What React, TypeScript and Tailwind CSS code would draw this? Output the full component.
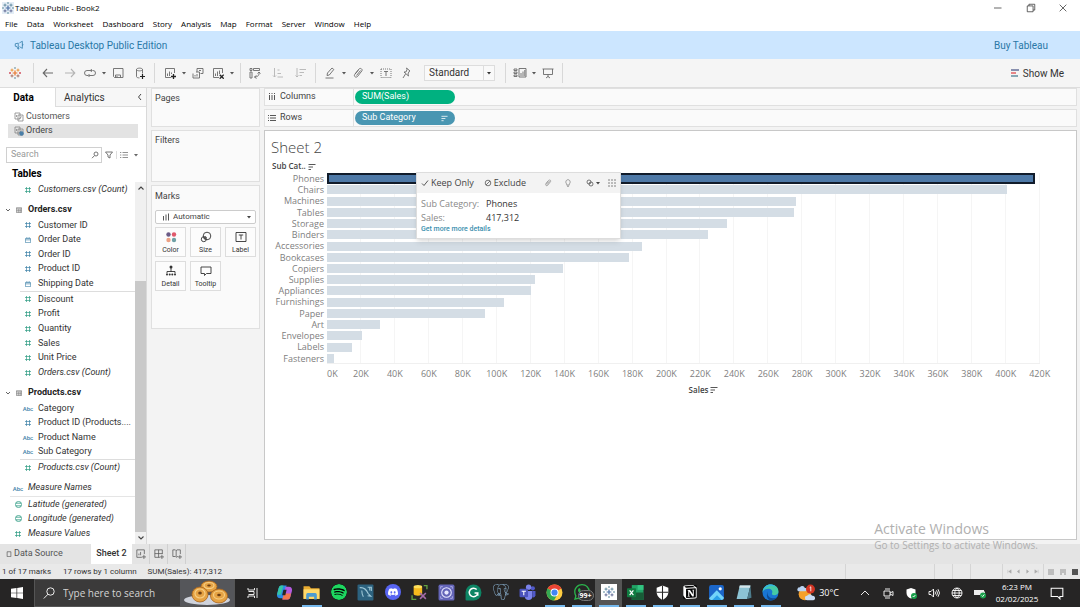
import type { ReactNode } from "react";
import {
  SiDiscord,
  SiGrammarly,
  SiNotion,
  SiPostgresql,
  SiSpotify,
  SiWhatsapp,
} from "react-icons/si";

type IconProps = { children: ReactNode; className?: string; box?: number };

const Icon = ({ children, className = "size-3", box = 12 }: IconProps) => (
  <svg
    viewBox={`0 0 ${box} ${box}`}
    className={`shrink-0 ${className}`}
    fill="none"
    stroke="currentColor"
    strokeWidth="0.9"
    aria-hidden="true"
  >
    {children}
  </svg>
);

const CaretIcon = () => (
  <Icon className="size-1" box={4}>
    <path d="M0 1h4L2 3.4z" fill="currentColor" stroke="none" />
  </Icon>
);

const SortIcon = ({ className = "size-2" }: { className?: string }) => (
  <Icon className={className} box={8}>
    <path d="M0.5 1.5h7M0.5 4h4.5M0.5 6.5h2.5" />
  </Icon>
);

const TableauMark = ({ colorful = false }: { colorful?: boolean }) => (
  <Icon>
    <path d="M6 3.6v4.8M3.6 6h4.8" stroke={colorful ? "#e8762d" : "#4a6fa5"} strokeWidth="1.2" />
    <path d="M3 1.6v3M1.5 3.1h3M9 1.6v3M7.5 3.1h3" stroke={colorful ? "#eb912c" : "#5b879b"} />
    <path d="M3 7.4v3M1.5 8.9h3M9 7.4v3M7.5 8.9h3" stroke={colorful ? "#a06a5b" : "#5b6591"} />
    <path d="M6 0v2M5 1h2M6 10v2M5 11h2" stroke="#7099a6" strokeWidth="0.7" />
    <path d="M1 5v2M0 6h2M11 5v2M10 6h2" stroke={colorful ? "#c72035" : "#7099a6"} strokeWidth="0.7" />
  </Icon>
);

const Tool = ({ label, children, dim }: { label: string; children: ReactNode; dim?: boolean }) => (
  <button
    type="button"
    aria-label={label}
    className={`flex h-6 w-5 items-center justify-center ${dim ? "text-[#b4b4b4]" : "text-[#6a6a6a]"}`}
  >
    {children}
  </button>
);

const ToolCaret = ({ label }: { label: string }) => (
  <button type="button" aria-label={label} className="flex h-6 w-2 items-center justify-center text-[#555]">
    <CaretIcon />
  </button>
);

const Divider = () => <span className="h-5 w-px bg-[#d8d8d8]" />;

const MENUS = [
  "File",
  "Data",
  "Worksheet",
  "Dashboard",
  "Story",
  "Analysis",
  "Map",
  "Format",
  "Server",
  "Window",
  "Help",
];

const WindowHeader = () => (
  <header className="bg-white font-['Open_Sans',sans-serif] text-[8px] text-black">
    <div className="flex h-4 items-center gap-px pl-0.5">
      <span className="flex bg-[#e4edf6]">
        <TableauMark />
      </span>
      <span>Tableau Public - Book2</span>
      <div className="ml-auto flex items-center gap-[22px] pr-3 text-[#333]">
        <button type="button" aria-label="Minimize">
          <Icon className="size-2.5">
            <path d="M0 6h9" />
          </Icon>
        </button>
        <button type="button" aria-label="Restore">
          <Icon className="size-2.5">
            <path d="M1.5 3.5h7v7h-7zM3.5 3.5v-2h7v7h-2" />
          </Icon>
        </button>
        <button type="button" aria-label="Close">
          <Icon className="size-2.5">
            <path d="M2 2l8 8M10 2l-8 8" />
          </Icon>
        </button>
      </div>
    </div>
    <nav className="flex h-[15px] items-center gap-[9px] pl-[5px]">
      {MENUS.map((m) => (
        <button key={m} type="button">
          {m}
        </button>
      ))}
    </nav>
  </header>
);

const Banner = () => (
  <div className="flex h-7 items-center bg-[#cce6ff] pr-8 pl-3.5 text-[10px] text-[#2a78a6]">
    <Icon className="mr-1.5 size-2.5">
      <path d="M1.5 4.5v3l2 .3 1.2 3h1.2l-.8-2.8V3.8zM6.5 3.5L10 1.5v8.5L6.5 8M10 4.5c1 .3 1 2 0 2.3" />
    </Icon>
    <span>Tableau Desktop Public Edition</span>
    <a href="#buy" className="ml-auto">
      Buy Tableau
    </a>
  </div>
);

const Toolbar = () => (
  <div className="flex h-7 items-center bg-[#f5f5f5] text-[#555]">
    <div className="flex pr-2 pl-[5px]">
      <Tool label="Start page">
        <TableauMark colorful />
      </Tool>
    </div>
    <Divider />
    <div className="flex px-1">
      <div className="flex gap-0.5">
        <Tool label="Undo">
          <Icon>
            <path d="M11 6H1.5M5 2L1.2 6 5 10" strokeWidth="1.1" />
          </Icon>
        </Tool>
        <Tool label="Redo" dim>
          <Icon>
            <path d="M1 6h9.500M7 2l3.800 4L7 10" strokeWidth="1.1" />
          </Icon>
        </Tool>
      </div>
      <Tool label="Replay">
        <Icon>
          <path d="M8 3.500H3a2.500 2.500 0 000 5h1M4.500 8.500H9a2.500 2.500 0 000-5M6.800 2L8.300 3.500 6.800 5M5.500 7L4 8.500 5.500 10" />
        </Icon>
      </Tool>
      <ToolCaret label="Replay options" />
      <div className="flex gap-0.5">
        <Tool label="Save">
          <Icon>
            <path d="M1.5 1.5h9.5v9H2.5l-1-1zM3.5 10.5V8h5v2.5M5 9v1" />
          </Icon>
        </Tool>
        <Tool label="New data source">
          <Icon>
            <path d="M2.5 2.5c0-1.8 6-1.8 6 0s-6 1.8-6 0v7c0 1 1.5 1.4 3 1.4M8.5 2.5v4" />
            <path d="M8.5 7v5M6 9.5h5" stroke="#222" strokeWidth="1.2" />
          </Icon>
        </Tool>
      </div>
    </div>
    <Divider />
    <div className="flex pr-1 pl-[5px]">
      <Tool label="New worksheet">
        <Icon>
          <path d="M10.5 6V1.5h-9v9H7M3.5 9V6.5M5.5 9V4.5M7.5 7V5.5" />
          <path d="M9.5 7v5M7 9.5h5" stroke="#222" strokeWidth="1.3" />
        </Icon>
      </Tool>
      <ToolCaret label="Worksheet options" />
      <Tool label="Duplicate">
        <Icon>
          <path d="M5 5V1.5h6v5H8.5M1 6.5V11h6.5V5H4M3 9.500V8M5 9.5V7M7 3.5h2" />
        </Icon>
      </Tool>
      <Tool label="Clear sheet">
        <Icon>
          <path d="M10.5 6V1.5h-9v9H7M3.5 9V6.5M5.5 9V4.5M7.5 7V3.5" />
          <path d="M7.7 7.7l4 4M11.7 7.7l-4 4" stroke="#222" strokeWidth="1.3" />
        </Icon>
      </Tool>
      <ToolCaret label="Clear options" />
    </div>
    <Divider />
    <div className="flex gap-[3px] px-1">
      <Tool label="Swap rows and columns">
        <Icon>
          <path d="M1 1.5h2v2H1zM4.500 1.5h6v2h-6zM1 5h2v6H1zM10 5c.5 3-1 5-4.500 5M7.500 8.500L5.500 10l2 1.500M8.500 6.500L10 5l1.500 1.500" />
        </Icon>
      </Tool>
      <Tool label="Sort ascending" dim>
        <Icon>
          <path d="M2.5 1v9M1 8.5L2.5 10 4 8.5M5.500 3h2M5.500 6.500h3.5M5.5 10H11" />
        </Icon>
      </Tool>
      <Tool label="Sort descending" dim>
        <Icon>
          <path d="M2 1v9M.5 8.5L2 10l1.5-1.5M4.5 2.5H11M4.5 5.5h4.5M4.5 8.5H7" />
        </Icon>
      </Tool>
    </div>
    <Divider />
    <div className="flex pr-2 pl-1">
      <Tool label="Highlight">
        <Icon>
          <path d="M3 8.5l.5-2.5L8 1l1.8 1.5-4.500 5.500zM1.5 11h8" />
        </Icon>
      </Tool>
      <ToolCaret label="Highlight options" />
      <Tool label="Group members">
        <Icon>
          <path d="M3 7l4-5c1.5-1.5 4 .3 2.8 2L5.5 9.5C4 11 1.5 9.5 2.7 7.5l3.6-4.3M4.5 8.5l4-5" />
        </Icon>
      </Tool>
      <ToolCaret label="Group options" />
      <Tool label="Show mark labels">
        <Icon>
          <path d="M1 2h10v8.5H1z" strokeDasharray="1 1" />
          <path d="M4 4.5h4M6 4.5V9" />
        </Icon>
      </Tool>
      <Tool label="Fix axes">
        <Icon>
          <path d="M6.5 1l3.5 3-1 .5-1 2.5.5 2L4 5l2 0 1-2.500zM5.5 7L3 11" />
        </Icon>
      </Tool>
    </div>
    <div className="mr-2.5 grid w-[71px] grid-cols-[1fr_11px] items-center border border-[#ddd] bg-[#f9f9f9] text-[#333]">
      <select
        aria-label="Fit"
        className="col-span-2 col-start-1 row-start-1 h-3.5 appearance-none pl-1 text-[10px] leading-[14px]"
      >
        <option>Standard</option>
      </select>
      <span className="pointer-events-none col-start-2 row-start-1 flex h-full items-center justify-center border-l border-[#ddd]">
        <CaretIcon />
      </span>
    </div>
    <Divider />
    <div className="flex px-1">
      <Tool label="Show cards">
        <Icon className="size-3.5" box={14}>
          <path d="M1 3h3v1.5H1zM1 6h3v1.5H1zM1 9h3v1.5H1zM6 2.5h7V11H6zM8 10V7M10 10V5.5M11.8 10V4" />
        </Icon>
      </Tool>
      <ToolCaret label="Card options" />
      <Tool label="Presentation mode">
        <Icon>
          <path d="M.5 2h11M1.5 2v5.5h9V2M6 7.5V10M4 11l2-1.5L8 11" />
        </Icon>
      </Tool>
    </div>
    <Divider />
    <button type="button" className="mr-4 ml-auto flex items-center gap-1 text-[10px] text-[#333]">
      <Icon className="size-2" box={8}>
        <path d="M0 1h8" stroke="#5b6591" strokeWidth="1.4" />
        <path d="M0 4h5" stroke="#e15759" strokeWidth="1.4" />
        <path d="M0 7h7" stroke="#5b879b" strokeWidth="1.4" />
      </Icon>
      Show Me
    </button>
  </div>
);

type FieldKind = "num" | "date" | "abc" | "geo";

const FieldIcon = ({ kind, measure }: { kind: FieldKind; measure?: boolean }) => {
  const color = measure ? "text-[#2f9c84]" : "text-[#3f82a8]";
  if (kind === "abc") {
    return <span className="w-3 text-center text-[6px] font-medium text-[#3f82a8]">Abc</span>;
  }
  return (
    <span className={`flex w-3 justify-center ${color}`}>
      {kind === "num" && (
        <Icon className="size-2" box={8}>
          <path d="M2.5 1v6M5.5 1v6M1 2.5h6M1 5.5h6" strokeWidth="0.7" />
        </Icon>
      )}
      {kind === "date" && (
        <Icon className="size-1.5" box={8}>
          <path d="M0.5 2h7v5.5h-7zM0.5 3.8h7M2.5 0v2M5.5 0v2" />
        </Icon>
      )}
      {kind === "geo" && (
        <Icon className="size-[7px]" box={8}>
          <path d="M4 .5a3.5 3.5 0 100 7 3.5 3.5 0 000-7zM1 2.500h6M1 5.500h6" />
        </Icon>
      )}
    </span>
  );
};

interface FieldProps {
  name: string;
  kind: FieldKind;
  measure?: boolean;
  italic?: boolean;
  root?: boolean;
}

const Field = ({ name, kind, measure, italic, root }: FieldProps) => (
  <li className={`flex h-full min-h-0 items-center gap-1 ${root ? "pl-3" : "pl-[22px]"}`}>
    <FieldIcon kind={kind} measure={measure} />
    <span className={`whitespace-nowrap ${italic ? "italic" : ""}`}>{name}</span>
  </li>
);

const TableHeading = ({ name }: { name: string }) => (
  <div className="flex h-4 items-center pl-1.5 font-bold text-[#222]">
    <Icon className="mr-1.5 size-1" box={4}>
      <path d="M0 1l2 2 2-2" strokeWidth="0.7" />
    </Icon>
    <Icon className="mr-1.5 size-1.5" box={8}>
      <path d="M.5 1h7v6.5h-7zM.5 2.5h7M.5 5h7M3 2.5v5M5.5 2.5v5" stroke="#777" />
    </Icon>
    {name}
  </div>
);

const ORDER_DIMENSIONS: FieldProps[] = [
  { name: "Customer ID", kind: "num" },
  { name: "Order Date", kind: "date" },
  { name: "Order ID", kind: "num" },
  { name: "Product ID", kind: "num" },
  { name: "Shipping Date", kind: "date" },
];

const ORDER_MEASURES: FieldProps[] = [
  { name: "Discount", kind: "num", measure: true },
  { name: "Profit", kind: "num", measure: true },
  { name: "Quantity", kind: "num", measure: true },
  { name: "Sales", kind: "num", measure: true },
  { name: "Unit Price", kind: "num", measure: true },
  { name: "Orders.csv (Count)", kind: "num", measure: true, italic: true },
];

const PRODUCT_DIMENSIONS: FieldProps[] = [
  { name: "Category", kind: "abc" },
  { name: "Product ID (Products....", kind: "num" },
  { name: "Product Name", kind: "abc" },
  { name: "Sub Category", kind: "abc" },
];

const GENERATED: FieldProps[] = [
  { name: "Latitude (generated)", kind: "geo", measure: true, italic: true, root: true },
  { name: "Longitude (generated)", kind: "geo", measure: true, italic: true, root: true },
  { name: "Measure Values", kind: "num", measure: true, italic: true, root: true },
];

const SourceIcon = ({ active }: { active?: boolean }) => (
  <Icon className="size-2.5" box={10}>
    <path d="M1 1h5v6H1zM4 3h5v6H4zM2.5 3v2M5.500 7l2-2.500" stroke="#777" strokeWidth="0.7" />
    {active && <circle cx="7.5" cy="7.5" r="2.2" fill="#4a7fa8" stroke="none" />}
  </Icon>
);

const DataPane = () => (
  <aside className="flex w-[147px] shrink-0 flex-col border-r border-[#d9d9d9] bg-white text-[9px] text-[#333]">
    <div className="flex h-[19px] text-[10px]">
      <button type="button" className="w-[55px] pr-2 font-bold text-black">
        Data
      </button>
      <div className="flex flex-1 items-center justify-between border-b border-l border-[#ddd] bg-[#f7f7f7] pr-0.5 pl-2">
        <button type="button">Analytics</button>
        <button type="button" aria-label="Collapse pane">
          <Icon className="size-2" box={8}>
            <path d="M5 1L2.5 4 5 7" />
          </Icon>
        </button>
      </div>
    </div>
    <div className="flex flex-col px-2 pt-[3px] pb-[9px]">
      <button type="button" className="flex h-[14px] items-center gap-0.5 pl-1.5 text-[#555]">
        <SourceIcon />
        Customers
      </button>
      <button type="button" className="flex h-[14px] items-center gap-0.5 bg-[#e3e3e3] pl-1.5 text-[#444]">
        <SourceIcon active />
        Orders
      </button>
    </div>
    <div className="flex items-center pr-2 pl-1.5 text-[#666]">
      <label className="flex h-4 w-[99px] items-center border border-[#d0d0d0] pr-0.5 pl-1">
        <input
          type="search"
          aria-label="Search fields"
          placeholder="Search"
          className="w-full min-w-0 outline-none placeholder:text-[#999]"
        />
        <Icon className="size-2" box={8}>
          <circle cx="5" cy="3" r="2" />
          <path d="M3.5 4.6L1 7.2" />
        </Icon>
      </label>
      <button type="button" aria-label="Filter fields" className="mx-[3px]">
        <Icon className="size-2" box={8}>
          <path d="M.5 1h7L5 4v3L3 6V4z" />
        </Icon>
      </button>
      <button type="button" aria-label="View options" className="flex items-center gap-1.5 border-l border-[#ddd] pl-[3px]">
        <Icon className="size-2" box={8}>
          <path d="M0 1.5h1.3M2.5 1.5H8M0 4h1.3M2.5 4H8M0 6.5h1.3M2.5 6.5H8" strokeWidth="0.7" />
        </Icon>
        <CaretIcon />
      </button>
    </div>
    <h2 className="flex h-[19px] items-center pt-0.5 pl-3 text-[10px] font-bold text-black">Tables</h2>
    <div className="flex flex-1">
      <div className="min-w-0 flex-1 overflow-hidden">
        <ul className="h-[15px]">
          <Field name="Customers.csv (Count)" kind="num" measure italic />
        </ul>
        <div className="pt-[5px]">
          <TableHeading name="Orders.csv" />
          <ul className="grid h-[73px] auto-rows-fr">
            {ORDER_DIMENSIONS.map((f) => (
              <Field key={f.name} {...f} />
            ))}
          </ul>
          <ul className="ml-5 grid h-[89px] auto-rows-fr border-t border-[#ddd] *:-ml-5">
            {ORDER_MEASURES.map((f) => (
              <Field key={f.name} {...f} />
            ))}
          </ul>
        </div>
        <div className="pt-[5px]">
          <TableHeading name="Products.csv" />
          <ul className="grid h-[58px] auto-rows-fr">
            {PRODUCT_DIMENSIONS.map((f) => (
              <Field key={f.name} {...f} />
            ))}
          </ul>
          <ul className="ml-5 h-4 border-t border-[#ddd] *:-ml-5">
            <Field name="Products.csv (Count)" kind="num" measure italic />
          </ul>
        </div>
        <ul className="mt-[5px] h-4">
          <Field name="Measure Names" kind="abc" italic root />
        </ul>
        <ul className="ml-2.5 grid h-[45px] auto-rows-fr border-t border-[#e5e5e5] *:-ml-2.5">
          {GENERATED.map((f) => (
            <Field key={f.name} {...f} />
          ))}
        </ul>
      </div>
      <div className="flex w-[11px] flex-col items-center bg-[#f0f0f0] text-[#444]">
        <Icon className="my-0.5 size-2" box={8}>
          <path d="M1.5 5.5L4 3l2.5 2.5" strokeWidth="1.1" />
        </Icon>
        <div className="mt-[87px] w-full flex-1 bg-[#c9c9c9]" />
        <Icon className="my-0.5 size-2" box={8}>
          <path d="M1.5 2.5L4 5l2.5-2.5" strokeWidth="1.1" />
        </Icon>
      </div>
    </div>
  </aside>
);

const CARD = "border border-[#e0e0e0] bg-[#fafafa]";

const MarkButton = ({ label, children }: { label: string; children: ReactNode }) => (
  <button
    type="button"
    className="flex h-[30px] flex-col items-center justify-end gap-0.5 border border-[#ddd] bg-[#fcfcfc] pb-px text-[7px] leading-[10px] text-[#333]"
  >
    {children}
    {label}
  </button>
);

const Cards = () => (
  <div className="flex w-[109px] shrink-0 flex-col gap-[3px] text-[9px] leading-3 text-[#444]">
    <section className={`${CARD} h-[39px] px-[3px] pt-[3px]`}>Pages</section>
    <section className={`${CARD} h-[52px] px-[3px] pt-[3px]`}>Filters</section>
    <section className={`${CARD} h-36 px-[3px] pt-1`}>
      Marks
      <div className="mt-2 grid grid-cols-1 items-center rounded-xs border border-[#ccc] bg-white">
        <select
          aria-label="Mark type"
          className="col-start-1 row-start-1 h-3 appearance-none pl-[17px] text-[8px] leading-3"
        >
          <option>Automatic</option>
        </select>
        <span className="pointer-events-none col-start-1 row-start-1 flex items-center justify-between pr-1 pl-1.5">
          <Icon className="size-2" box={8}>
            <path d="M1.5 3v4.500M4 1.500v6M6.500 .5v7" />
          </Icon>
          <CaretIcon />
        </span>
      </div>
      <div className="mt-[3px] grid grid-cols-3 gap-1">
        <MarkButton label="Color">
          <Icon>
            <g stroke="none">
              <circle cx="3.5" cy="3.5" r="2.2" fill="#6b5b86" />
              <circle cx="9" cy="3.5" r="2.2" fill="#e0596b" />
              <circle cx="3.5" cy="9" r="2.2" fill="#eda184" />
              <circle cx="9" cy="9" r="2.2" fill="#6fa0a5" />
            </g>
          </Icon>
        </MarkButton>
        <MarkButton label="Size">
          <Icon>
            <circle cx="7" cy="5" r="3.8" />
            <circle cx="3.8" cy="8.2" r="2.5" />
            <circle cx="5.3" cy="6.7" r="1" />
          </Icon>
        </MarkButton>
        <MarkButton label="Label">
          <Icon>
            <path d="M1 1.5h10v9H1zM3.8 4h4.4M6 4v4.500" />
          </Icon>
        </MarkButton>
        <MarkButton label="Detail">
          <Icon>
            <path d="M6 3v4M2 8.5V6.5h8v2" />
            <g stroke="none" fill="#333">
              <circle cx="6" cy="2" r="1.5" />
              <circle cx="2" cy="9.5" r="1" />
              <circle cx="4.7" cy="9.5" r="1" />
              <circle cx="7.3" cy="9.5" r="1" />
              <circle cx="10" cy="9.5" r="1" />
            </g>
          </Icon>
        </MarkButton>
        <MarkButton label="Tooltip">
          <Icon>
            <path d="M1 2h10v6.5H6.5L4.5 10.5V8.5H1z" />
          </Icon>
        </MarkButton>
      </div>
    </section>
  </div>
);

const Shelf = ({ label, icon, children }: { label: string; icon: ReactNode; children: ReactNode }) => (
  <div className={`flex h-[18px] items-center text-[9px] text-[#444] ${CARD}`}>
    <div className="flex h-full w-[89px] items-center gap-1 border-r border-[#e0e0e0] pl-[3px]">
      {icon}
      {label}
    </div>
    {children}
  </div>
);

const AXIS_MAX = 420000;
const AXIS_TICKS = Array.from({ length: 22 }, (_, i) => i * 20);

const SALES = [
  { name: "Phones", value: 417312 },
  { name: "Chairs", value: 400500 },
  { name: "Machines", value: 276300 },
  { name: "Tables", value: 275200 },
  { name: "Storage", value: 235400 },
  { name: "Binders", value: 224700 },
  { name: "Accessories", value: 185500 },
  { name: "Bookcases", value: 177700 },
  { name: "Copiers", value: 138800 },
  { name: "Supplies", value: 122300 },
  { name: "Appliances", value: 120000 },
  { name: "Furnishings", value: 104000 },
  { name: "Paper", value: 92900 },
  { name: "Art", value: 31100 },
  { name: "Envelopes", value: 20600 },
  { name: "Labels", value: 14500 },
  { name: "Fasteners", value: 4000 },
];

const MarkTooltip = () => (
  <div className="absolute top-[41px] left-[151px] w-[205px] border border-[#ddd] bg-white text-[9px] shadow-md">
    <div className="flex h-5 items-center bg-[#f3f3f3] px-1 text-[#444]">
      <button type="button" className="flex items-center gap-0.5">
        <Icon className="size-2" box={8}>
          <path d="M1 4.5L3 6.5 7 1.5" />
        </Icon>
        Keep Only
      </button>
      <button type="button" className="ml-2.5 flex items-center gap-0.5">
        <Icon className="size-2" box={8}>
          <circle cx="4" cy="4" r="2.8" strokeWidth="0.7" />
          <path d="M2 6l4-4" strokeWidth="0.7" />
        </Icon>
        Exclude
      </button>
      <div className="ml-auto flex items-center gap-3 text-[#777]">
        <button type="button" aria-label="Group members">
          <Icon className="size-2">
            <path d="M3 7l4-5c1.5-1.5 4 .3 2.8 2L5.5 9.5C4 11 1.5 9.5 2.7 7.5l3.6-4.3M4.5 8.5l4-5" />
          </Icon>
        </button>
        <button type="button" aria-label="Explain data">
          <Icon className="size-2" box={8}>
            <path d="M2.8 5C1 3.5 2 .7 4 .7s3 2.8 1.2 4.3v1.2H2.8zM3.2 7.5h1.6" strokeWidth="0.7" />
          </Icon>
        </button>
        <button type="button" aria-label="Create set" className="ml-0.5 flex items-center gap-0.5 text-[#444]">
          <Icon className="size-2" box={8}>
            <circle cx="3" cy="3" r="2" strokeWidth="0.7" />
            <circle cx="5" cy="5" r="2" strokeWidth="0.7" />
          </Icon>
          <CaretIcon />
        </button>
        <button type="button" aria-label="View data" className="-ml-1">
          <Icon className="size-2" box={8}>
            <path d="M0 1h8M0 4h8M0 7h8" strokeDasharray="2 1" />
          </Icon>
        </button>
      </div>
    </div>
    <dl className="grid grid-cols-[65px_1fr] px-1 pt-1 leading-[14px] whitespace-nowrap text-[#888] [&_dd]:font-medium [&_dd]:text-[#333]">
      <dt>Sub Category:</dt>
      <dd>Phones</dd>
      <dt>Sales:</dt>
      <dd>417,312</dd>
    </dl>
    <a href="#details" className="block px-1 pb-1 font-[Roboto,sans-serif] text-[7px] leading-[9px] font-medium text-[#3a8fae]">
      Get more more details
    </a>
  </div>
);

const Chart = () => (
  <section className="relative flex-1 border border-[#c8c8c8] bg-white font-['Open_Sans',sans-serif]">
    <h1 className="px-1.5 pt-1.5 text-[15px] leading-5 font-light text-[#444]">Sheet 2</h1>
    <div className="flex h-4 items-end gap-0.5 pl-[7px] text-[8px] leading-[14px] font-semibold text-[#444]">
      Sub Cat..
      <SortIcon className="mb-0.5 size-2" />
    </div>
    <div className="grid grid-cols-[62px_1fr] pr-9">
      <ul className="grid h-[191px] auto-rows-fr pr-[3px] text-right text-[9px] text-[#808080]">
        {SALES.map((row) => (
          <li key={row.name} className="flex min-h-0 items-center justify-end">
            {row.name}
          </li>
        ))}
      </ul>
      <div className="grid h-[191px]">
        <div className="col-start-1 row-start-1 grid grid-cols-21 border-b border-[#f0f0f0]">
          {AXIS_TICKS.slice(1).map((t) => (
            <span key={t} className="border-r border-[#f5f5f5]" />
          ))}
        </div>
        <ul className="col-start-1 row-start-1 grid auto-rows-fr">
          {SALES.map((row, i) => (
            <li key={row.name} className="flex min-h-0 items-center">
              <div
                className={i === 0 ? "h-[11px] border-2 border-[#111c2b] bg-[#4e79a7]" : "h-[9px] bg-[#d4dde5]"}
                style={{ width: `${(row.value / AXIS_MAX) * 100}%` }}
              />
            </li>
          ))}
        </ul>
      </div>
      <div className="col-start-2 flex justify-between pt-1 text-[9px] leading-3 text-[#808080]">
        {AXIS_TICKS.map((t) => (
          <span key={t} className="flex w-0 justify-center first:justify-start">
            {t}K
          </span>
        ))}
      </div>
      <div className="col-start-2 flex items-center justify-center gap-0.5 pt-1 pl-10 text-[8px] leading-3 font-semibold text-[#444]">
        Sales
        <SortIcon />
      </div>
    </div>
    <MarkTooltip />
  </section>
);

const Worksheet = () => (
  <div className="flex min-w-0 flex-1 flex-col">
    <div className="flex flex-col gap-[3px] pb-[3px]">
      <Shelf
        label="Columns"
        icon={
          <Icon className="size-2" box={8}>
            <path d="M1.5 0v1M4 0v1M6.5 0v1M1.5 2v5M4 2v5M6.5 2v5" />
          </Icon>
        }
      >
        <button
          type="button"
          className="ml-px flex h-3.5 w-[100px] items-center rounded-full bg-[#00b180] px-[7px] text-[9px] text-white"
        >
          SUM(Sales)
        </button>
      </Shelf>
      <Shelf
        label="Rows"
        icon={
          <Icon className="size-2" box={8}>
            <path d="M0 1.5h1M2 1.5h6M0 4h1M2 4h6M0 6.5h1M2 6.5h6" />
          </Icon>
        }
      >
        <button
          type="button"
          className="ml-px flex h-3.5 w-[100px] items-center justify-between rounded-full bg-[#4996b2] px-[7px] text-[9px] text-white"
        >
          Sub Category
          <SortIcon className="size-[7px]" />
        </button>
      </Shelf>
    </div>
    <Chart />
  </div>
);

const SheetTabs = () => (
  <div className="flex h-5 items-stretch bg-[#e4e4e4] text-[9px] text-[#555]">
    <button type="button" className="flex w-[91px] items-center gap-0.5 pl-1.5">
      <Icon className="size-1.5" box={8}>
        <path d="M1.5 1h5v6.5h-5z" />
      </Icon>
      Data Source
    </button>
    <button type="button" className="w-[41px] bg-white font-medium text-[#333]">
      Sheet 2
    </button>
    {["New worksheet", "New dashboard", "New story"].map((label, i) => (
      <button
        key={label}
        type="button"
        aria-label={label}
        className="flex w-[18px] items-center justify-center border-r border-[#d0d0d0]"
      >
        <Icon className="size-2.5">
          {i === 0 && <path d="M7 10H1V1h9v5M3.5 7.5v-2M5.5 7.5v-4M9.5 7v5M7 9.5h5" />}
          {i === 1 && <path d="M7 10H1V1h9v5M5.5 1v9M1 5.5h9M9.5 7v5M7 9.5h5" />}
          {i === 2 && <path d="M7 9H6L5 10 4 9H1V1h3l1 1 1-1h4v5M5 2v7M9.5 7v5M7 9.5h5" />}
        </Icon>
      </button>
    ))}
  </div>
);

const StatusBar = () => (
  <footer className="flex h-[15px] items-center bg-[#e9e9e9] pl-0.5 text-[8px] text-[#333]">
    <span>1 of 17 marks</span>
    <span className="ml-3">17 rows by 1 column</span>
    <span className="ml-[11px]">SUM(Sales): 417,312</span>
    <div className="ml-auto flex h-full items-center text-[#aaa]">
      <span className="h-full w-[89px] border-l border-[#d5d5d5]" />
      <span className="h-full w-[18px] border-l border-[#d5d5d5]" />
      <span className="h-full w-[18px] border-l border-[#d5d5d5]" />
      <span className="h-full w-8 border-l border-[#d5d5d5]" />
      <div className="flex h-full items-center gap-1 border-l border-[#d5d5d5] px-1">
        {["M1 1v4M5 1L2 3l3 2z", "M4 1L1.5 3 4 5z", "M2 1l2.5 2L2 5z", "M5 1v4M1 1l3 2-3 2z"].map((d) => (
          <button key={d} type="button" aria-label="Scroll sheets">
            <Icon className="size-[5px]" box={6}>
              <path d={d} fill="currentColor" strokeWidth="0.5" />
            </Icon>
          </button>
        ))}
      </div>
      <div className="flex h-full items-center gap-1.5 border-l border-[#d5d5d5] pr-0.5 pl-1 text-[#888]">
        <Icon className="size-1.5" box={6}>
          <path d="M0 1h6M0 3h6M0 5h6" />
        </Icon>
        <Icon className="size-1.5" box={6}>
          <path d="M0 1h6M0 3h6M0 5h2M4 5h2" />
        </Icon>
        <span className="size-1.5 bg-[#555]" />
      </div>
    </div>
  </footer>
);

interface TaskApp {
  name: string;
  icon: ReactNode;
  open?: boolean;
  active?: boolean;
}

const Art = ({ children }: { children: ReactNode }) => (
  <svg viewBox="0 0 32 32" className="size-[17px]" aria-hidden="true">
    {children}
  </svg>
);

const APPS: TaskApp[] = [
  {
    name: "Copilot",
    icon: (
      <Art>
        <path d="M10 3h10l-6 24H8c-5 0-7-4-6-8l3-11c1-3 2-5 5-5z" fill="#2b8ce6" />
        <path d="M2 20l3-12c1-3 2-5 5-5h4L9 20z" fill="#35c6a4" />
        <path d="M22 29H12l6-24h6c5 0 7 4 6 8l-3 11c-1 3-2 5-5 5z" fill="#b45be0" />
        <path d="M22 29H12l3-11h13l-1 6c-1 3-2 5-5 5z" fill="#f3764d" />
        <path d="M14 11h6l-2.5 10h-6z" fill="#262626" />
      </Art>
    ),
  },
  {
    name: "File Explorer",
    open: true,
    icon: (
      <Art>
        <path d="M1 4h11l3 4h16v20H1z" fill="#e8ab30" />
        <path d="M1 10h30v18H1z" fill="#ffd96b" />
        <path d="M6 29V20q0-3 3-3h14q3 0 3 3v9h-5v-5H11v5z" fill="#4d9bd1" />
      </Art>
    ),
  },
  { name: "Spotify", icon: <SiSpotify className="size-4 rounded-full bg-black text-[#1ed760]" /> },
  {
    name: "MySQL Workbench",
    icon: (
      <Art>
        <rect x="1" y="1" width="30" height="30" rx="2" fill="#2c627f" />
        <path
          d="M5 7c7-1 13 4 16 11l5 5-6-1M9 12c0 5 1 8 3 12M20 6h7v7M24 6v6"
          fill="none"
          stroke="#9fc8d8"
          strokeWidth="2"
        />
      </Art>
    ),
  },
  {
    name: "Discord",
    icon: (
      <span className="flex size-4 items-center justify-center rounded-full bg-[#5865f2]">
        <SiDiscord className="size-2.5 text-white" />
      </span>
    ),
  },
  {
    name: "SQL Server Tools",
    icon: (
      <Art>
        <path d="M5 5v14c0 4 16 4 16 0V5z" fill="#f6b91c" />
        <ellipse cx="13" cy="5" rx="8" ry="3" fill="#ffe05c" />
        <path d="M17 17l11 11M28 17L17 28" stroke="#a56aa8" strokeWidth="3" />
        <path d="M2 21v8h8M24 3h6v7" fill="none" stroke="#62a342" strokeWidth="2.5" />
      </Art>
    ),
  },
  {
    name: "Screen Recorder",
    icon: (
      <Art>
        <rect x="1" y="1" width="30" height="30" rx="3" fill="#6465b8" />
        <circle cx="16" cy="16" r="9" fill="none" stroke="#e9e9ff" strokeWidth="2" />
        <circle cx="16" cy="16" r="4" fill="#e9e9ff" />
        <path d="M5 9V5h4M23 5h4v4M5 23v4h4M23 27h4v-4" fill="none" stroke="#b9b9f0" strokeWidth="1.5" />
      </Art>
    ),
  },
  {
    name: "Grammarly",
    icon: (
      <Art>
        <path d="M16 1a15 15 0 110 30H3q-2 0-2-2V16A15 15 0 0116 1z" fill="#0d8464" />
        <path d="M22 10.500a8 8 0 102 6.500h-6M24 17v5" fill="none" stroke="#fff" strokeWidth="2.8" />
      </Art>
    ),
  },
  { name: "pgAdmin", icon: <SiPostgresql className="size-4 text-[#8fb8d8]" /> },
  {
    name: "Teams",
    icon: (
      <Art>
        <circle cx="26" cy="8" r="4" fill="#5059c9" />
        <circle cx="18" cy="6" r="5" fill="#7b83eb" />
        <path d="M11 13h14v10a7 7 0 01-14 0z" fill="#7b83eb" />
        <path d="M25 13h6v8a5 5 0 01-6 4z" fill="#5059c9" />
        <rect x="1" y="9" width="16" height="16" rx="2" fill="#4b53bc" />
        <path d="M5 13.5h8M9 13.5V21" stroke="#fff" strokeWidth="2" />
      </Art>
    ),
  },
  {
    name: "Chrome",
    open: true,
    icon: (
      <Art>
        <circle cx="16" cy="16" r="15" fill="#ffcd41" />
        <path d="M16 16L3 8.5a15 15 0 0126 0z" fill="#ea4335" />
        <path d="M16 16L3 8.5A15 15 0 0015 31l7-12z" fill="#34a853" />
        <circle cx="16" cy="16" r="7.5" fill="#fff" />
        <circle cx="16" cy="16" r="5.8" fill="#4285f4" />
      </Art>
    ),
  },
  {
    name: "WhatsApp",
    open: true,
    icon: (
      <span className="relative">
        <SiWhatsapp className="size-4 text-[#2bb24c]" />
        <span className="absolute top-1.5 left-1 rounded-full border border-[#777] bg-[#333] px-px text-[7px] leading-[9px] font-bold text-white">
          99+
        </span>
      </span>
    ),
  },
  {
    name: "Tableau",
    open: true,
    active: true,
    icon: (
      <span className="flex size-4 items-center justify-center bg-white">
        <TableauMark />
      </span>
    ),
  },
  {
    name: "Excel",
    open: true,
    icon: (
      <Art>
        <path d="M9 2h22v28H9z" fill="#21a366" />
        <path d="M20 2h11v9H20z" fill="#33c481" />
        <path d="M9 16h22v14H9z" fill="#185c37" />
        <rect x="0" y="8" width="17" height="17" rx="1.5" fill="#107c41" />
        <path d="M5 12l7 9M12 12l-7 9" stroke="#fff" strokeWidth="2.3" />
      </Art>
    ),
  },
  {
    name: "Windows Security",
    open: true,
    icon: (
      <Art>
        <path d="M16 3l11 4v8c0 7-5 12-11 15C10 27 5 22 5 15V7z" fill="#fff" />
        <path d="M16 3v27M5 15.5h22" stroke="#262626" strokeWidth="2" />
      </Art>
    ),
  },
  {
    name: "Notion",
    open: true,
    icon: <SiNotion className="size-3.5 rounded-xs bg-black text-white" />,
  },
  {
    name: "Photos",
    open: true,
    icon: (
      <Art>
        <rect x="2" y="2" width="28" height="28" rx="4" fill="#1b66c9" />
        <path d="M2 27l13-14c1-1 2-1 3 0l12 13q0 4-4 4H6q-4 0-4-3z" fill="#72d3fa" />
        <path d="M8 30l9-9 9 9z" fill="#2aa0e8" />
        <circle cx="23" cy="9" r="3" fill="#fff" />
      </Art>
    ),
  },
  {
    name: "Notepad",
    open: true,
    icon: (
      <Art>
        <path d="M9 3h20l-6 25H3z" fill="#8cc3d4" />
        <path d="M23 28l6-25 2 23z" fill="#4d7c8c" />
        <path d="M9 3h20l-1 4H8z" fill="#d6e5ea" />
      </Art>
    ),
  },
  {
    name: "Edge",
    open: true,
    icon: (
      <Art>
        <circle cx="16" cy="16" r="15" fill="#1976d2" />
        <path d="M1 15C2 6 9 1 16 1c9 0 15 6 15 13 0 5-4 7-8 7s-5-2-4-4c2-4-2-8-7-8C7 9 3 11 1 15z" fill="#45c9a5" />
        <path d="M1 15C2 6 9 1 16 1c4 0 7 1 10 4-7-3-20-1-25 10z" fill="#35b8dc" />
        <path d="M12 13c-4 5 0 13 8 14 4 0 7-1 9-3-3 5-8 7-13 7C9 29 7 19 12 13z" fill="#0d4b94" />
      </Art>
    ),
  },
];

const TRAY: { label: string; icon: ReactNode }[] = [
  { label: "Show hidden icons", icon: <path d="M2 8l4-4 4 4" /> },
  { label: "Meet now", icon: <path d="M2 4h6v5H2zM8 6l3-1.5v4L8 7M3 2h5M3 11h5" /> },
  {
    label: "Security status",
    icon: (
      <>
        <path d="M6 1l4.5 1.5V6c0 3-2 4.5-4.5 5.5C3.5 10.5 1.5 9 1.5 6V2.5z" fill="#fff" stroke="none" />
        <circle cx="9" cy="9" r="3" fill="#19a04b" stroke="none" />
        <path d="M7.7 9l1 1 1.6-2" />
      </>
    ),
  },
  {
    label: "Volume",
    icon: <path d="M1 4.5h2L5.5 2v8L3 7.5H1zM7 4.5q1 1.5 0 3M8.5 3.3q2 2.7 0 5.4M10 2.2q3 3.8 0 7.6" />,
  },
  {
    label: "Network",
    icon: <path d="M6 1a5 5 0 100 10A5 5 0 006 1zM1 6h10M6 1c-3 3-3 7 0 10M6 1c3 3 3 7 0 10M1.7 3.5h8.6M1.7 8.5h8.6" />,
  },
  {
    label: "Battery",
    icon: (
      <>
        <path d="M0 3h10v5H0z" fill="#eee" stroke="none" />
        <path d="M10.5 4.5v2" />
        <circle cx="9" cy="8.5" r="3" fill="#19a04b" stroke="none" />
        <path d="M7.7 8.5l1 1 1.6-2" />
      </>
    ),
  },
];

const Taskbar = () => (
  <div className="flex h-7 items-stretch bg-[#262525] font-['Open_Sans',sans-serif] text-white">
    <button type="button" aria-label="Start" className="flex w-[34px] items-center justify-center">
      <Icon>
        <path
          d="M0 1.7L5.5 1v4.7H0zM6.2.9L12 0v5.7H6.2zM0 6.3h5.5V11L0 10.3zM6.2 6.3H12V12l-5.8-.9z"
          fill="#fff"
          stroke="none"
        />
      </Icon>
    </button>
    <label className="flex w-[201px] items-center border border-[#555] bg-[#3b3a3a] pl-2">
      <Icon>
        <circle cx="7.5" cy="4.5" r="3.7" />
        <path d="M5 7.2L.8 11.5" />
      </Icon>
      <input
        type="search"
        aria-label="Search Windows"
        placeholder="Type here to search"
        className="ml-2 w-0 flex-1 text-[10px] outline-none placeholder:text-[#d4d4d4]"
      />
      <svg viewBox="0 0 54 26" className="h-[26px] w-[54px] bg-[#55565a]" aria-hidden="true">
        <ellipse cx="27" cy="20" rx="23" ry="5" fill="#cfd3dc" />
        <g fill="#e5a243" stroke="#a9641c" strokeWidth="0.8">
          <ellipse cx="29" cy="6.5" rx="8" ry="5.5" />
          <ellipse cx="20" cy="14.5" rx="8" ry="7.5" />
          <ellipse cx="39" cy="16" rx="8.5" ry="7" />
        </g>
        <g fill="none" stroke="#f7ce83" strokeWidth="1.2">
          <ellipse cx="29" cy="5.5" rx="5" ry="3" />
          <ellipse cx="20" cy="13.5" rx="5" ry="4.5" />
          <ellipse cx="39" cy="15" rx="5.5" ry="4" />
        </g>
        <g fill="#6f3f12">
          <ellipse cx="29" cy="5.5" rx="1.8" ry="1" />
          <ellipse cx="20" cy="13" rx="1.8" ry="1.5" />
          <ellipse cx="39" cy="15" rx="1.8" ry="1.3" />
        </g>
      </svg>
    </label>
    <button type="button" aria-label="Task view" className="flex w-9 items-center justify-center">
      <Icon>
        <path d="M1 1v2h6.5V1M1 11V9h6.5v2M1.5 4.5H7v3H1.5M10 1v3M10 6v5M9 5h2" />
      </Icon>
    </button>
    {APPS.map((app) => (
      <button
        key={app.name}
        type="button"
        aria-label={app.name}
        className={`flex w-[27px] flex-col items-center ${app.active ? "bg-[#555]" : ""}`}
      >
        <span className="flex flex-1 items-center">{app.icon}</span>
        <span className={`h-0.5 w-5 ${app.open ? "bg-[#76b9ed]" : ""}`} />
      </button>
    ))}
    <button type="button" className="ml-auto flex items-center gap-1 text-[9px]">
      <svg viewBox="0 0 32 32" className="size-[18px]" aria-hidden="true">
        <circle cx="14" cy="18" r="11" fill="#f5a02c" />
        <path d="M2 13a4 4 0 013-7 5 5 0 019 1 3 3 0 011 6z" fill="#b9d3f2" />
        <path d="M18 29a4 4 0 010-8 5 5 0 019 0 4 4 0 012 8z" fill="#c7dbf5" />
        <circle cx="24" cy="9" r="8" fill="#d13423" />
        <path d="M22.5 6.5L24.5 5v8" fill="none" stroke="#fff" strokeWidth="1.5" />
      </svg>
      30°C
    </button>
    <div className="ml-5 flex items-center gap-[11px]">
      {TRAY.map((t) => (
        <button key={t.label} type="button" aria-label={t.label}>
          <Icon>{t.icon}</Icon>
        </button>
      ))}
    </div>
    <button type="button" className="ml-2 w-[46px] text-center text-[8px] leading-3 whitespace-nowrap">
      <span className="block">6:23 PM</span>
      <span className="block">02/02/2025</span>
    </button>
    <button type="button" aria-label="Notifications" className="mr-4 ml-2.5">
      <Icon className="size-3.5">
        <path d="M1 2h10v7H8.5v2L6.5 9H1z" />
      </Icon>
    </button>
  </div>
);

export default function App() {
  return (
    <div className="relative flex min-h-screen flex-col bg-[#f0f0f0] font-[Roboto,sans-serif]">
      <WindowHeader />
      <Banner />
      <Toolbar />
      <main className="flex flex-1 gap-1 border-t border-[#ddd] bg-[#f3f3f3] pr-[3px]">
        <DataPane />
        <Cards />
        <div className="flex min-w-0 flex-1 pb-1">
          <Worksheet />
        </div>
      </main>
      <SheetTabs />
      <StatusBar />
      <Taskbar />
      <div className="pointer-events-none absolute right-[42px] bottom-[56px] font-['Open_Sans',sans-serif] text-[#b0b0b0]">
        <p className="text-[14px] leading-5">Activate Windows</p>
        <p className="text-[10px] leading-3">Go to Settings to activate Windows.</p>
      </div>
    </div>
  );
}
